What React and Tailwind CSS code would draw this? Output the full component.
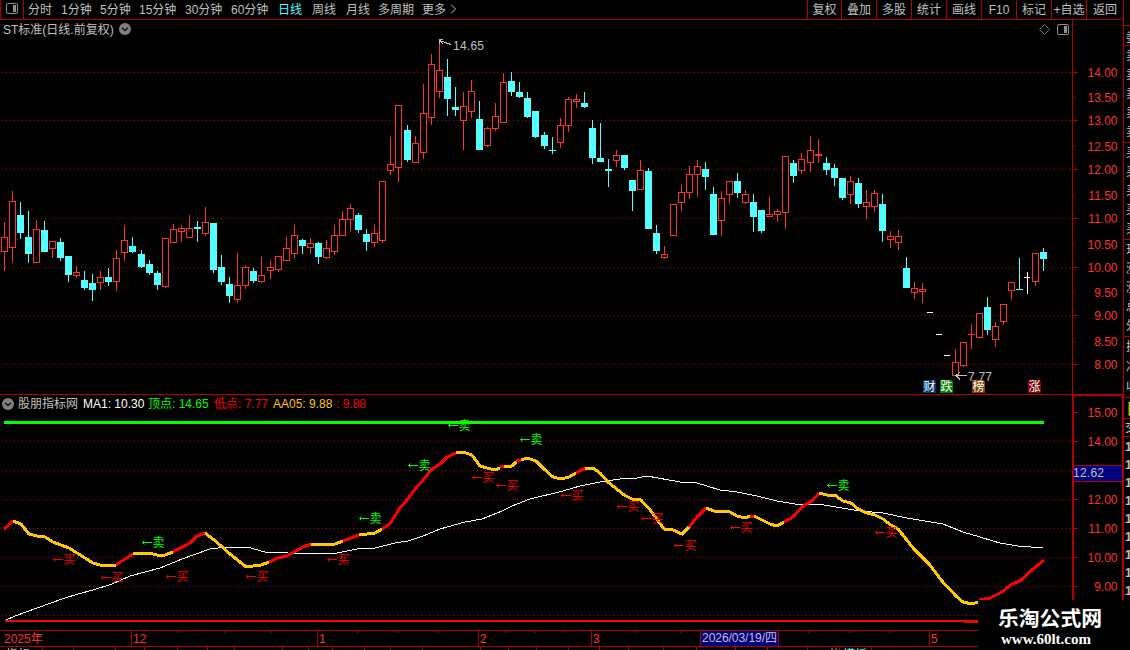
import { Fragment } from 'react';

const RED = '#ff3232';
const CYAN = '#54ffff';
const LINE = '#b00000';

const periods = [
  ['分时', 'w-[33px]'], ['1分钟', 'w-[39px]'], ['5分钟', 'w-[39px]'], ['15分钟', 'w-[46px]'],
  ['30分钟', 'w-[46px]'], ['60分钟', 'w-[47px]'], ['日线', 'w-[34px] text-[#54ffff]'],
  ['周线', 'w-[34px]'], ['月线', 'w-[32px]'], ['多周期', 'w-[44px]'], ['更多', 'w-[26px]'],
];

const actions = [
  ['复权', 'w-[34px]'], ['叠加', 'w-[35px]'], ['多股', 'w-[35px]'], ['统计', 'w-[35px]'], ['画线', 'w-[35px]'],
  ['F10', 'w-[35px]'], ['标记', 'w-[35px]'], ['+自选', 'w-[35px]'], ['返回', 'w-[37px]'],
];

// [center x, high, body top, body bottom, low, r = up / c = down / w = flat]
const candles = [
  [4, 222, 237, 252, 271, 'r'], [12, 191, 201, 248, 263, 'r'], [20, 202, 215, 233, 239, 'c'], [28, 211, 237, 254, 263, 'c'],
  [36, 220, 229, 263, 263, 'r'], [44, 221, 230, 252, 252, 'c'], [52, 241, 241, 249, 258, 'r'], [60, 238, 242, 258, 261, 'c'],
  [68, 256, 256, 275, 282, 'c'], [76, 266, 272, 276, 278, 'r'], [84, 271, 280, 288, 290, 'c'], [92, 274, 283, 290, 301, 'c'],
  [100, 271, 277, 283, 290, 'r'], [108, 268, 277, 282, 286, 'c'], [116, 250, 258, 282, 291, 'r'], [124, 225, 240, 253, 261, 'r'],
  [132, 237, 246, 252, 253, 'c'], [141, 250, 254, 267, 268, 'c'], [149, 260, 264, 273, 275, 'c'], [157, 271, 273, 285, 290, 'c'],
  [165, 238, 238, 287, 288, 'r'], [173, 224, 229, 243, 243, 'r'], [181, 225, 228, 232, 242, 'r'], [189, 215, 228, 238, 238, 'r'],
  [197, 221, 227, 229, 242, 'c'], [205, 207, 222, 234, 236, 'r'], [213, 223, 223, 270, 273, 'c'], [221, 255, 267, 282, 285, 'c'],
  [229, 277, 284, 296, 303, 'c'], [237, 253, 285, 300, 303, 'r'], [245, 265, 267, 286, 289, 'r'], [253, 268, 271, 281, 283, 'c'],
  [261, 257, 275, 282, 283, 'r'], [270, 260, 267, 271, 279, 'r'], [278, 256, 256, 270, 272, 'r'], [286, 237, 248, 261, 261, 'r'],
  [294, 225, 235, 254, 258, 'r'], [302, 239, 240, 246, 254, 'c'], [310, 238, 243, 248, 254, 'r'], [318, 242, 243, 257, 264, 'c'],
  [326, 240, 248, 258, 259, 'r'], [334, 225, 235, 252, 255, 'r'], [342, 211, 219, 236, 236, 'r'], [350, 204, 208, 220, 231, 'r'],
  [358, 213, 215, 230, 233, 'c'], [366, 229, 234, 242, 251, 'c'], [374, 225, 233, 243, 247, 'r'], [382, 181, 181, 241, 243, 'r'],
  [390, 137, 164, 171, 175, 'r'], [398, 105, 105, 168, 182, 'r'], [407, 125, 130, 160, 162, 'c'], [415, 136, 143, 163, 163, 'r'],
  [423, 84, 113, 153, 159, 'r'], [431, 54, 64, 118, 125, 'r'], [439, 42, 70, 92, 98, 'r'], [447, 59, 77, 99, 116, 'c'],
  [455, 87, 107, 110, 116, 'c'], [463, 92, 106, 121, 150, 'r'], [471, 80, 91, 112, 118, 'r'], [479, 101, 119, 150, 150, 'c'],
  [487, 127, 128, 146, 147, 'r'], [495, 103, 116, 129, 131, 'r'], [503, 73, 82, 123, 123, 'r'], [511, 72, 81, 92, 96, 'c'],
  [519, 82, 92, 97, 98, 'c'], [527, 92, 98, 117, 118, 'c'], [535, 111, 111, 137, 138, 'c'], [544, 132, 135, 146, 149, 'c'],
  [552, 137, 150, 151, 154, 'c'], [560, 118, 125, 143, 148, 'r'], [568, 97, 99, 126, 132, 'r'], [576, 94, 99, 102, 108, 'r'],
  [584, 92, 103, 107, 108, 'c'], [592, 120, 128, 158, 164, 'c'], [600, 123, 158, 162, 162, 'c'], [608, 159, 169, 171, 187, 'c'],
  [616, 150, 155, 161, 167, 'r'], [624, 155, 155, 168, 170, 'c'], [632, 180, 180, 191, 211, 'c'], [640, 160, 170, 190, 190, 'r'],
  [648, 168, 171, 229, 229, 'c'], [656, 225, 233, 251, 254, 'c'], [664, 246, 254, 258, 259, 'r'], [673, 204, 204, 236, 236, 'r'],
  [681, 185, 192, 203, 211, 'r'], [689, 166, 174, 193, 199, 'r'], [697, 160, 166, 175, 197, 'r'], [705, 162, 169, 177, 190, 'c'],
  [713, 187, 194, 235, 235, 'c'], [721, 191, 198, 221, 236, 'r'], [729, 181, 181, 195, 204, 'r'], [737, 173, 181, 193, 198, 'c'],
  [745, 190, 194, 203, 204, 'r'], [753, 194, 202, 217, 232, 'c'], [761, 210, 210, 231, 233, 'c'], [769, 197, 214, 217, 217, 'r'],
  [777, 209, 211, 215, 222, 'r'], [785, 156, 156, 213, 229, 'r'], [793, 160, 163, 176, 183, 'c'], [801, 153, 159, 171, 174, 'r'],
  [810, 136, 150, 163, 172, 'r'], [818, 139, 154, 156, 163, 'r'], [826, 157, 163, 170, 175, 'c'], [834, 164, 168, 178, 186, 'c'],
  [842, 178, 178, 198, 200, 'c'], [850, 176, 181, 195, 204, 'r'], [858, 178, 183, 204, 208, 'c'], [866, 190, 202, 207, 219, 'r'],
  [874, 190, 193, 207, 212, 'r'], [882, 194, 204, 231, 242, 'c'], [890, 231, 236, 240, 248, 'r'], [898, 230, 236, 243, 250, 'r'],
  [906, 257, 268, 288, 288, 'c'], [914, 282, 288, 293, 299, 'r'], [922, 283, 289, 292, 303, 'r'], [930, 312, 312, 313, 313, 'w'],
  [939, 334, 334, 335, 335, 'w'], [947, 355, 355, 356, 356, 'w'], [955, 349, 362, 376, 376, 'r'], [963, 342, 342, 366, 367, 'r'],
  [971, 324, 334, 335, 349, 'r'], [979, 313, 313, 338, 338, 'r'], [987, 297, 307, 330, 335, 'c'], [995, 322, 326, 340, 347, 'r'],
  [1003, 304, 304, 322, 325, 'r'], [1011, 282, 282, 291, 300, 'r'], [1019, 258, 289, 290, 290, 'c'], [1027, 272, 277, 278, 294, 'w'],
  [1035, 253, 253, 282, 286, 'r'], [1043, 248, 252, 259, 271, 'c'],
];

const priceLabels = [
  ['14.00', 72], ['13.50', 97], ['13.00', 120], ['12.50', 146], ['12.00', 169], ['11.50', 195], ['11.00', 218],
  ['10.50', 244], ['10.00', 267], ['9.50', 292], ['9.00', 315], ['8.50', 341], ['8.00', 364],
];
const subLabels = [['15.00', 412], ['14.00', 441], ['12.00', 499], ['11.00', 528], ['10.00', 557], ['9.00', 586]];

const priceGrid = [72, 120, 169, 218, 267, 315, 364];
const subGrid = [441, 470, 499, 528, 557, 586, 615];

const badges = [['财', 923, '#003a70'], ['跌', 940, '#008000'], ['榜', 972, '#804000'], ['涨', 1028, '#800000']];

// Short average, split where its colour changes
const upColor = '#ff0000';
const downColor = '#ffc800';
const avgSegments = [
  [upColor, '4,529 13,521'],
  [downColor, '13,521 21,524 29,534 37,536 45,537 53,542 69,548 77,553 85,558 93,563 100,565 108,566 116,565'],
  [upColor, '116,565 125,559 133,554'],
  [downColor, '133,554 149,553 157,555 165,555 173,552'],
  [upColor, '173,552 190,543 197,536 205,533'],
  [downColor, '205,533 213,539 221,546 230,554 245,566 253,566 261,565 269,562'],
  [upColor, '269,562 278,558 287,556 303,547 311,544'],
  [downColor, '311,544 335,544 343,541'],
  [upColor, '343,541 359,535'],
  [downColor, '359,535 375,533 382,529'],
  [upColor, '382,529 390,524 399,509 407,500 416,488 424,479 432,469 440,464 447,457 456,453'],
  [downColor, '456,453 463,452 472,455 480,466 487,468 495,470 500,468'],
  [upColor, '500,467 504,466.5'],
  [downColor, '504,466.5 512,466 516,462'],
  [upColor, '516,461 521,460'],
  [downColor, '521,460 527,458 536,461 544,469 553,477 561,479 569,477 576,473'],
  [upColor, '576,473 585,468'],
  [downColor, '585,468 593,468 600,473 608,482 624,495 632,499 641,500 651,511 664,529 673,530 682,534 689,527'],
  [upColor, '689,527 698,516 706,508'],
  [downColor, '706,508 714,511 730,512 737,516 745,518 750,516'],
  [upColor, '750,516 754,516'],
  [downColor, '754,516 770,524 777,526 784,522'],
  [upColor, '784,522 793,517 803,506 812,501 819,493'],
  [downColor, '819,493 827,495 835,495 843,501 851,503 858,509 867,513 875,515 883,519 891,525 898,529 906,539 914,549 930,565 941,580 956,596 963,602 972,604 978,602'],
  [upColor, '979,600 990,598 1002,592 1012,584 1020,581 1032,570 1044,560'],
];
const longAvg = '6,620 15,616 62,599 78,594 93,590 112,584 130,576 160,568 182,559 210,549 227,547 247,547 265,552 288,553 337,553 357,549 375,548 395,543 408,541 423,536 440,529 465,522 482,519 502,511 512,506 530,499 563,491 580,486 600,482 620,479 637,478 647,476 680,482 697,483 720,490 737,492 757,496 777,501 795,504 817,504 830,506 860,511 883,513 907,518 943,524 963,532 980,537 993,541 1000,543 1018,546 1043,548';

const buys = [[53, 559], [101, 577], [166, 576], [246, 576], [327, 559], [472, 477], [496, 485], [561, 495], [617, 506], [641, 518], [674, 545], [730, 527], [875, 532]];
const sells = [[142, 542], [359, 518], [408, 465], [448, 425], [520, 439], [827, 485]];

const months = [['12', 131], ['1', 317], ['2', 478], ['3', 591], ['5', 929]];
const weekTicks = [178, 224, 271, 357, 398, 438, 506, 535, 563, 635, 680, 808, 849, 889];
const tabTicks = [42, 73, 115, 144, 177, 207, 234, 282, 308, 332, 364, 390, 422, 480, 508, 536, 568, 599, 628, 663, 696, 735, 767, 807, 839, 871];

// Left edges of the quote panel that is scrolled out on the right
const quoteRows = [
  ['h-[20px] pt-[4px]', ['委']],
  ['h-[97px]', ['卖', '卖', '卖', '卖', '卖']],
  ['h-[97px]', ['买', '买', '买', '买', '买']],
  ['h-[97px]', ['现', '涨', '涨', '总', '外']],
  ['h-[61px]', ['换', '净', '收']],
];

function Candle({ data }) {
  const [cx, high, top, bottom, low, kind] = data;
  const color = kind === 'r' ? RED : kind === 'c' ? CYAN : '#ffffff';
  const hollow = kind === 'r' && bottom - top > 2;
  return (
    <g fill={color}>
      {top > high && <rect x={cx} y={high} width="1" height={top - high} />}
      {low > bottom && <rect x={cx} y={bottom} width="1" height={low - bottom} />}
      <rect x={cx - 3} y={top} width={kind === 'w' ? 6 : 7} height={bottom - top} />
      {hollow && <rect x={cx - 2} y={top + 1} width="5" height={bottom - top - 2} fill="#000" />}
    </g>
  );
}

function GridLines({ rows }) {
  return rows.map(y => (
    <g key={y}>
      <line x1="1" x2="1072" y1={y + 0.5} y2={y + 0.5} stroke="#a01010" strokeDasharray="1 3" />
      <rect x="1073" y={y} width="5" height="1" fill={LINE} />
    </g>
  ));
}

function AxisLabels({ labels }) {
  return labels.map(([text, y]) => (
    <text key={text} x="1117.5" y={y + 5} textAnchor="end" fill={RED}>{text}</text>
  ));
}

function Signal({ x, y, text, color }) {
  return (
    <g>
      <path d={`M${x + 2.5} ${y - 1.5}L${x + 0.5} ${y + 0.5}H${x + 10}M${x + 0.5} ${y + 0.5}L${x + 2.5} ${y + 2.5}`} fill="none" stroke={color} />
      <text x={x + 10.5} y={y + 5} fill={color}>{text}</text>
    </g>
  );
}

function PanelIcon({ className }) {
  return (
    <svg className={className} width="12" height="11" viewBox="0 0 12 11">
      <rect x="0.5" y="0.5" width="11" height="10" rx="1.5" fill="none" stroke="#909090" />
      <rect x="7" y="2" width="3" height="7" fill="#909090" />
    </svg>
  );
}

function DropIcon() {
  return (
    <svg className="shrink-0" width="12" height="12" viewBox="0 0 12 12">
      <circle cx="6" cy="6" r="6" fill="#808080" />
      <path d="M3 4.8L6 7.6L9 4.8" fill="none" stroke="#101010" strokeWidth="1.4" />
    </svg>
  );
}

function Toolbar() {
  return (
    <div className="flex h-[20px] border-b border-[#b00000] leading-[21px] whitespace-nowrap">
      <div className="flex w-[24px] items-center justify-center border-x border-[#b00000] pb-[2px]">
        <PanelIcon />
      </div>
      <div className="flex flex-1 pl-[4px]">
        {periods.map(([label, cls]) => <div key={label} className={cls}>{label}</div>)}
        <svg className="mt-[4px] ml-[2px]" width="7" height="10" viewBox="0 0 7 10">
          <path d="M1 0.5L5.5 5L1 9.5" fill="none" stroke="#c0c0c0" />
        </svg>
      </div>
      {actions.map(([label, cls]) => (
        <div key={label} className={`border-l border-[#b00000] text-center ${cls}`}>{label}</div>
      ))}
    </div>
  );
}

function PriceChart() {
  return (
    <section>
      <div className="flex h-[18px]">
        <div className="flex w-[1072px] items-center pl-[3px]">
          <span className="w-[116px] pt-[2px]">ST标准(日线.前复权)</span>
          <DropIcon />
          <svg className="ml-auto" width="11" height="11" viewBox="0 0 11 11">
            <path d="M5.5 0.5L10.5 5.5L5.5 10.5L0.5 5.5Z" fill="none" stroke="#808080" strokeWidth="0.9" />
          </svg>
          <PanelIcon className="mr-[3px] ml-[7px]" />
        </div>
        <div className="flex-1 border-l border-[#b00000]" />
      </div>
      <svg className="block overflow-visible" width="1123" height="356" viewBox="0 38 1123 356" shapeRendering="crispEdges">
        <GridLines rows={priceGrid} />
        <rect x="1072" y="38" width="1" height="356" fill={LINE} />
        {[97, 146, 195, 244, 292, 341].map(y => <rect key={y} x="1073" y={y} width="2" height="1" fill={LINE} />)}
        <AxisLabels labels={priceLabels} />
        {candles.map(c => <Candle key={c[0]} data={c} />)}
        <g fill="none" stroke="#c0c0c0">
          <path d="M443 39.5H440L439.5 41V44M440 40.5L445 42.5L451 44.5M440 41L443 44" />
          <path d="M956 375.5H967M960 372.5L956 375.5L960 379.5" />
        </g>
        <text x="453" y="50" fill="#c0c0c0" textLength="31">14.65</text>
        <text x="968" y="381" fill="#c0c0c0" textLength="24">7.77</text>
        {badges.map(([text, x, color]) => (
          <g key={text}>
            <path d={`M${x} 380H${x + 11}L${x + 13} 382V393H${x}Z`} fill={color} />
            <text x={x + 0.5} y="391" fill="#fff">{text}</text>
          </g>
        ))}
      </svg>
    </section>
  );
}

function IndicatorChart() {
  return (
    <section className="border-t border-[#b00000]">
      <div className="flex h-[17px] whitespace-nowrap">
        <div className="flex w-[1072px] items-center pl-[2px]">
          <DropIcon />
          <span className="ml-[4px] w-[65px]">股朋指标网</span>
          <span className="w-[65px] text-white">MA1: 10.30</span>
          <span className="w-[66px] text-[#00ff00]">顶点: 14.65</span>
          <span className="w-[59px] text-[#ff0000]">低点: 7.77</span>
          <span className="w-[63px] text-[#ffc800]">AA05: 9.88</span>
          <span className="text-[#ff0000]">: 9.88</span>
        </div>
        <div className="flex-1 border-x-2 border-t border-[#b00000]" />
      </div>
      <svg className="block overflow-visible" width="1124" height="218" viewBox="0 412 1124 218">
        <g shapeRendering="crispEdges">
          <GridLines rows={subGrid} />
          <rect x="1072" y="412" width="2" height="218" fill={LINE} />
          <rect x="1122" y="412" width="2" height="218" fill={LINE} />
          <rect x="1073" y="412" width="5" height="1" fill={LINE} />
          {[427, 456, 485, 514, 543, 572].map(y => <rect key={y} x="1074" y={y} width="1" height="1" fill={LINE} />)}
          <rect x="4" y="421" width="1040" height="3" fill="#00ff00" />
          <rect x="5" y="620" width="973" height="2" fill="#ff0000" />
          <rect x="964" y="622" width="14" height="1" fill="#ff0000" />
          <polyline points={longAvg} fill="none" stroke="#fff" />
          {avgSegments.map(([color, points]) => (
            <polyline key={points} points={points} fill="none" stroke={color} strokeWidth="3" />
          ))}
          <rect x="1073" y="465" width="49" height="17" fill={LINE} />
          <rect x="1074" y="466" width="48" height="15" fill="#000080" />
        </g>
        <AxisLabels labels={subLabels} />
        <text x="1073" y="477" fill="#c0c0c0" textLength="31">12.62</text>
        {sells.map(([x, y]) => <Signal key={x} x={x} y={y} text="卖" color="#00ff00" />)}
        {buys.map(([x, y]) => <Signal key={x} x={x} y={y} text="买" color="#ff0000" />)}
      </svg>
    </section>
  );
}

function DateAxis() {
  return (
    <svg className="block" width="1124" height="20" viewBox="0 630 1124 20">
      <rect x="0" y="630" width="1124" height="1" fill={LINE} />
      <rect x="0" y="646" width="1124" height="1" fill={LINE} />
      {weekTicks.map(x => <rect key={x} x={x} y="631" width="1" height="2" fill={LINE} />)}
      {tabTicks.map(x => <rect key={x} x={x} y="647" width="1" height="3" fill={LINE} />)}
      <text x="4" y="643" fill={RED}>2025年</text>
      {months.map(([label, x]) => (
        <Fragment key={label}>
          <rect x={x} y="630" width="1" height="16" fill={LINE} />
          <text x={x + 2} y="643" fill={RED}>{label}</text>
        </Fragment>
      ))}
      <rect x="700" y="630" width="79" height="16" fill={LINE} />
      <rect x="701" y="631" width="77" height="15" fill="#000080" />
      <text x="702" y="642" fill="#c0c0c0" textLength="75">2026/03/19/四</text>
      <text x="6" y="659" fill="#c0c0c0">指标</text>
      <text x="828" y="659" fill="#c0c0c0">分</text>
      <text x="843" y="659" fill={CYAN}>模板</text>
    </svg>
  );
}

function QuoteEdge() {
  return (
    <aside className="w-[6px] shrink-0 overflow-hidden pt-[25px]">
      {quoteRows.map(([cls, chars], i) => (
        <div key={i} className={`flex w-[16px] flex-col justify-around border-t border-[#b00000] pl-[2px] leading-[14px] ${cls}`}>
          {chars.map((c, j) => <span key={j}>{c}</span>)}
        </div>
      ))}
      <div className="h-[21px] w-[16px] border-t border-[#b00000] pt-[2px] pl-[2px] text-[15px] leading-[18px] text-[#e0e000]">日</div>
      <div className="h-[19px] w-[14px] border-y border-[#b00000] pl-[1px] leading-[18px]">交</div>
      <div className="flex w-[14px] flex-col pt-[1px] pl-[1px] font-bold leading-[18px]">
        {Array.from({ length: 9 }, (_, i) => <span key={i}>1</span>)}
      </div>
    </aside>
  );
}

export default function App() {
  return (
    <div className="relative flex h-[650px] w-[1130px] overflow-hidden bg-black font-['Liberation_Sans','Noto_Sans_CJK_SC',sans-serif] text-[12px] text-[#c0c0c0]">
      <main className="w-[1124px] shrink-0">
        <div className="border-r border-[#b00000]">
          <Toolbar />
          <PriceChart />
        </div>
        <IndicatorChart />
        <DateAxis />
      </main>
      <QuoteEdge />
      <div className="absolute right-0 bottom-0 flex h-[50px] w-[152px] flex-col bg-black pt-[6px] pl-[20px] whitespace-nowrap text-white">
        <span className="text-[20.8px] leading-[26px] font-bold">乐淘公式网</span>
        <span className="pl-[3px] font-['Liberation_Serif',serif] text-[15px] leading-[14px] font-bold">www.60lt.com</span>
      </div>
    </div>
  );
}
